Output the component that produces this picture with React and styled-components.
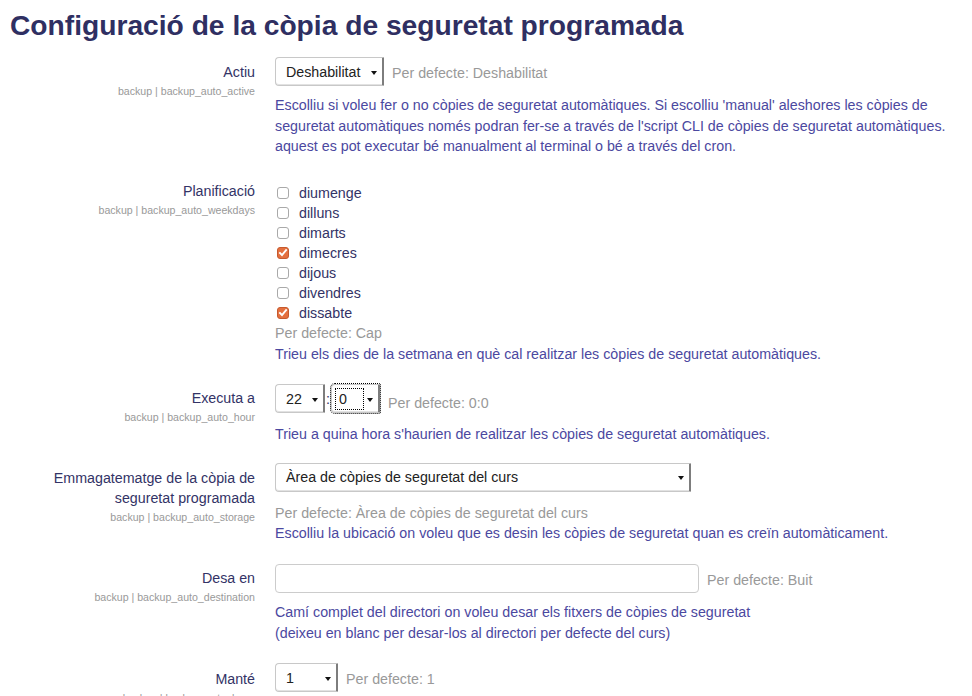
import React from "react";
import styled, { createGlobalStyle } from "styled-components";

const GlobalStyle = createGlobalStyle`
  body {
    margin: 0;
    background: #fff;
    font-family: "Liberation Sans", Arial, sans-serif;
    font-size: 14.25px;
  }
`;

const Page = styled.div`
  padding: 0 10px;
`;

const Title = styled.h2`
  margin: 0;
  padding: 8px 0 15px;
  font-size: 28.2px;
  line-height: 34px;
  font-weight: bold;
  color: #2f2f62;
`;

const Setting = styled.div`
  display: grid;
  grid-template-columns: 245px 1fr;
  column-gap: 20px;
  margin-bottom: ${(p) => p.$gap ?? 21}px;
`;

const LabelCol = styled.div`
  text-align: right;
  padding-top: ${(p) => p.$top ?? 0}px;
`;

const LabelText = styled.div`
  font-size: 14.25px;
  line-height: 20px;
  color: #333366;
`;

const SubLabel = styled.div`
  margin-top: 2px;
  font-size: 10.6px;
  line-height: 14px;
  color: #999;
`;

const ControlCol = styled.div`
  display: flex;
  flex-direction: column;
  align-items: flex-start;
`;

const ControlLine = styled.div`
  display: flex;
  align-items: center;
  gap: 8px;
`;

const TimeGroup = styled.div`
  display: flex;
  align-items: center;
`;

const Select = styled.div`
  position: relative;
  box-sizing: border-box;
  width: ${(p) => p.$w}px;
  height: 29px;
  display: flex;
  align-items: center;
  padding-left: 10px;
  background: #fff;
  border: 1px solid #c8c8c8;
  border-right: 2px solid #7d7d7d;
  border-radius: 4px 1px 1px 4px;
  box-shadow: inset 0 -1px 0 #e2e2e2;
  color: #222;
  font-size: 14.25px;
  outline: ${(p) => (p.$focus ? "1px dotted #000" : "none")};
  outline-offset: 0;

  &::after {
    content: "";
    position: absolute;
    right: 5px;
    top: 50%;
    margin-top: -1px;
    border-left: 3px solid transparent;
    border-right: 3px solid transparent;
    border-top: 4px solid #111;
  }
`;

const FocusText = styled.span`
  padding: 2px 16px 2px 3px;
  margin-left: -7px;
  border: 1px dotted #000;
`;

const Colon = styled.span`
  width: 6px;
  text-align: center;
  color: #333366;
`;

const Default = styled.span`
  font-size: 14.25px;
  color: #999;
  padding-top: ${(p) => p.$down ?? 0}px;
`;

const DefaultLine = styled.div`
  font-size: 14.25px;
  line-height: 20px;
  color: #999;
  margin-top: ${(p) => p.$top ?? 0}px;
`;

const Desc = styled.div`
  margin-top: ${(p) => p.$top ?? 9}px;
  font-size: 14.25px;
  line-height: 20.5px;
  color: #4b48a0;
`;

const CheckList = styled.div`
  padding-top: 2px;
`;

const CheckRow = styled.label`
  display: flex;
  align-items: center;
  height: 20px;
  color: #333366;
  font-size: 14.25px;
`;

const Box = styled.span`
  box-sizing: border-box;
  width: 12px;
  height: 12px;
  margin: 0 10px 0 2px;
  border-radius: 3px;
  border: 1px solid ${(p) => (p.$on ? "#c65a2e" : "#a9a9a9")};
  background: ${(p) => (p.$on ? "#e4703f" : "#fff")};
  display: flex;
  align-items: center;
  justify-content: center;
`;

const TextInput = styled.div`
  box-sizing: border-box;
  width: 424px;
  height: 29px;
  border: 1px solid #cccccc;
  border-radius: 4px;
  background: #fff;
`;

const days = [
  ["diumenge", false],
  ["dilluns", false],
  ["dimarts", false],
  ["dimecres", true],
  ["dijous", false],
  ["divendres", false],
  ["dissabte", true],
];

const Check = ({ on, children }) => (
  <CheckRow>
    <Box $on={on}>
      {on && (
        <svg width="10" height="9" viewBox="0 0 10 9">
          <path d="M1.3 4.3 L4 7 L8.7 1.3" fill="none" stroke="#fff" strokeWidth="1.9" />
        </svg>
      )}
    </Box>
    {children}
  </CheckRow>
);

export default function App() {
  return (
    <Page>
      <GlobalStyle />
      <Title>Configuració de la còpia de seguretat programada</Title>

      <Setting $gap={24}>
        <LabelCol $top={5}>
          <LabelText>Actiu</LabelText>
          <SubLabel>backup | backup_auto_active</SubLabel>
        </LabelCol>
        <ControlCol>
          <ControlLine>
            <Select $w={109}>Deshabilitat</Select>
            <Default $down={3}>Per defecte: Deshabilitat</Default>
          </ControlLine>
          <Desc>
            Escolliu si voleu fer o no còpies de seguretat automàtiques. Si escolliu 'manual' aleshores les còpies de
            <br />
            seguretat automàtiques només podran fer-se a través de l'script CLI de còpies de seguretat automàtiques.
            <br />
            aquest es pot executar bé manualment al terminal o bé a través del cron.
          </Desc>
        </ControlCol>
      </Setting>

      <Setting $gap={20}>
        <LabelCol>
          <LabelText>Planificació</LabelText>
          <SubLabel>backup | backup_auto_weekdays</SubLabel>
        </LabelCol>
        <ControlCol>
          <CheckList>
            {days.map(([d, on]) => (
              <Check key={d} on={on}>
                {d}
              </Check>
            ))}
          </CheckList>
          <DefaultLine>Per defecte: Cap</DefaultLine>
          <Desc $top={1}>Trieu els dies de la setmana en què cal realitzar les còpies de seguretat automàtiques.</Desc>
        </ControlCol>
      </Setting>

      <Setting $gap={18}>
        <LabelCol $top={4}>
          <LabelText>Executa a</LabelText>
          <SubLabel>backup | backup_auto_hour</SubLabel>
        </LabelCol>
        <ControlCol>
          <ControlLine>
            <TimeGroup>
              <Select $w={50}>22</Select>
              <Colon>:</Colon>
              <Select $w={49} $focus>
                <FocusText>0</FocusText>
              </Select>
            </TimeGroup>
            <Default $down={8}>Per defecte: 0:0</Default>
          </ControlLine>
          <Desc $top={11}>Trieu a quina hora s'haurien de realitzar les còpies de seguretat automàtiques.</Desc>
        </ControlCol>
      </Setting>

      <Setting $gap={21}>
        <LabelCol $top={5}>
          <LabelText>
            Emmagatematge de la còpia de
            <br />
            seguretat programada
          </LabelText>
          <SubLabel>backup | backup_auto_storage</SubLabel>
        </LabelCol>
        <ControlCol>
          <Select $w={416}>Àrea de còpies de seguretat del curs</Select>
          <DefaultLine $top={11}>Per defecte: Àrea de còpies de seguretat del curs</DefaultLine>
          <Desc $top={0}>Escolliu la ubicació on voleu que es desin les còpies de seguretat quan es creïn automàticament.</Desc>
        </ControlCol>
      </Setting>

      <Setting $gap={20}>
        <LabelCol $top={4}>
          <LabelText>Desa en</LabelText>
          <SubLabel>backup | backup_auto_destination</SubLabel>
        </LabelCol>
        <ControlCol>
          <ControlLine>
            <TextInput />
            <Default $down={3}>Per defecte: Buit</Default>
          </ControlLine>
          <Desc>
            Camí complet del directori on voleu desar els fitxers de còpies de seguretat
            <br />
            (deixeu en blanc per desar-los al directori per defecte del curs)
          </Desc>
        </ControlCol>
      </Setting>

      <Setting $gap={20}>
        <LabelCol $top={6}>
          <LabelText>Manté</LabelText>
          <SubLabel>backup | backup_auto_keep</SubLabel>
        </LabelCol>
        <ControlCol>
          <ControlLine>
            <Select $w={63}>1</Select>
            <Default $down={3}>Per defecte: 1</Default>
          </ControlLine>
        </ControlCol>
      </Setting>
    </Page>
  );
}
